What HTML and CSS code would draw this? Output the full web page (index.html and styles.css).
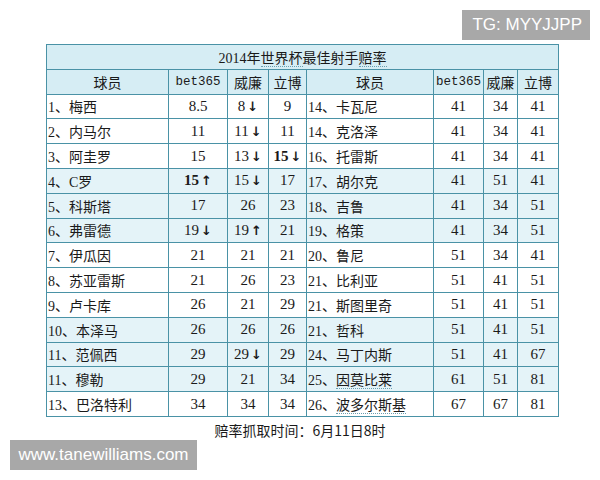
FILE: index.html
```
<!DOCTYPE html>
<html lang="zh">
<head>
<meta charset="utf-8">
<link rel="stylesheet" href="styles.css">
</head>
<body>
<div class="page">
  <div class="tg-row"><div class="tg">TG: MYYJJPP</div></div>
  <table class="odds">
    <colgroup>
      <col class="c-name"><col class="c-b"><col class="c-w"><col class="c-l">
      <col class="c-name2"><col class="c-b2"><col class="c-w2"><col class="c-l2">
    </colgroup>
    <tr class="title"><td colspan="8">2014年<span class="ul">世界杯</span>最佳射手<span class="ul">赔率</span></td></tr>
    <tr class="head"><td>球员</td><td class="mono">bet365</td><td>威廉</td><td>立博</td><td>球员</td><td class="mono">bet365</td><td>威廉</td><td>立博</td></tr>
    <tr><td class="nm">1、梅西</td><td>8.5</td><td>8<i>↓</i></td><td>9</td><td class="nm">14、卡瓦尼</td><td>41</td><td>34</td><td>41</td></tr>
    <tr><td class="nm">2、内马尔</td><td>11</td><td>11<i>↓</i></td><td>11</td><td class="nm">14、克洛泽</td><td>41</td><td>34</td><td>41</td></tr>
    <tr><td class="nm">3、阿圭罗</td><td>15</td><td>13<i>↓</i></td><td><b>15<i>↓</i></b></td><td class="nm">16、托雷斯</td><td>41</td><td>34</td><td>41</td></tr>
    <tr class="alt"><td class="nm">4、C罗</td><td><b>15<i>↑</i></b></td><td>15<i>↓</i></td><td>17</td><td class="nm">17、胡尔克</td><td>41</td><td>51</td><td>41</td></tr>
    <tr class="alt"><td class="nm">5、科斯塔</td><td>17</td><td>26</td><td>23</td><td class="nm">18、吉鲁</td><td>41</td><td>34</td><td>51</td></tr>
    <tr class="alt"><td class="nm">6、弗雷德</td><td>19<i>↓</i></td><td>19<i>↑</i></td><td>21</td><td class="nm">19、格策</td><td>41</td><td>34</td><td>51</td></tr>
    <tr><td class="nm">7、伊瓜因</td><td>21</td><td>21</td><td>21</td><td class="nm">20、鲁尼</td><td>51</td><td>34</td><td>41</td></tr>
    <tr><td class="nm">8、苏亚雷斯</td><td>21</td><td>26</td><td>23</td><td class="nm">21、比利亚</td><td>51</td><td>41</td><td>51</td></tr>
    <tr><td class="nm">9、卢卡库</td><td>26</td><td>21</td><td>29</td><td class="nm">21、斯图里奇</td><td>51</td><td>41</td><td>51</td></tr>
    <tr class="alt"><td class="nm">10、本泽马</td><td>26</td><td>26</td><td>26</td><td class="nm">21、哲科</td><td>51</td><td>41</td><td>51</td></tr>
    <tr class="alt"><td class="nm">11、范佩西</td><td>29</td><td>29<i>↓</i></td><td>29</td><td class="nm">24、马丁内斯</td><td>51</td><td>41</td><td>67</td></tr>
    <tr class="alt"><td class="nm">11、穆勒</td><td>29</td><td>21</td><td>34</td><td class="nm">25、<span class="ul">因莫比莱</span></td><td>61</td><td>51</td><td>81</td></tr>
    <tr><td class="nm">13、巴洛特利</td><td>34</td><td>34</td><td>34</td><td class="nm">26、<span class="ul">波多尔斯基</span></td><td>67</td><td>67</td><td>81</td></tr>
  </table>
  <p class="note">赔率抓取时间：6月11日8时</p>
  <div class="wm">www.tanewilliams.com</div>
</div>
</body>
</html>
```
FILE: styles.css
```
html, body {
  margin: 0;
  padding: 0;
  background: #ffffff;
}
.page {
  width: 600px;
  height: 480px;
  position: relative;
  font-family: "Liberation Serif", "Noto Sans CJK SC", serif;
  color: #1a1a1a;
}
.tg-row {
  display: flex;
  justify-content: flex-end;
  padding: 10px 10px 0 0;
  height: 30px;
}
.tg {
  background: #a8a8a8;
  color: #ffffff;
  font-family: "Liberation Sans", Arial, sans-serif;
  font-size: 17px;
  line-height: 30px;
  height: 30px;
  padding: 0 8px 0 10px;
}
.odds {
  margin: 4px 0 0 46px;
  border-collapse: collapse;
  width: 512px;
  height: 373px;
  table-layout: fixed;
  font-size: 15px;
}
.c-name { width: 122px; }
.c-b { width: 59px; }
.c-w { width: 41px; }
.c-l { width: 38px; }
.c-name2 { width: 127px; }
.c-b2 { width: 50px; }
.c-w2 { width: 34px; }
.c-l2 { width: 41px; }
.odds td {
  border: 1px solid #4a92a6;
  text-align: center;
  padding: 0;
  white-space: nowrap;
  overflow: hidden;
  font-family: "Liberation Serif", "Noto Sans CJK SC", serif;
}
.odds td.nm {
  text-align: left;
  padding-left: 1px;
  font-size: 14px;
}
.odds .title td {
  background: #d6edf4;
  font-size: 14px;
}
.odds .head td {
  background: #d6edf4;
  font-size: 14px;
}
.odds .head td.mono {
  font-family: "Liberation Mono", monospace;
  font-size: 12.5px;
}
.odds tr.alt td {
  background: #e4f3f8;
}
.odds i {
  font-style: normal;
  font-weight: bold;
  font-family: "DejaVu Sans", sans-serif;
  font-size: 13px;
  margin-left: 2px;
}
.odds b {
  font-weight: bold;
}
.ul {
  border-bottom: 1px dotted #6a9fb0;
}
.note {
  margin: 4px 0 0 0;
  text-align: center;
  font-size: 14px;
  line-height: 18px;
  font-family: "Noto Sans CJK SC", sans-serif;
}
.wm {
  position: absolute;
  left: 10px;
  top: 440px;
  width: 187px;
  height: 30px;
  background: #a8a8a8;
  color: #ffffff;
  font-family: "Liberation Sans", Arial, sans-serif;
  font-size: 17px;
  line-height: 30px;
  text-align: center;
}
```
